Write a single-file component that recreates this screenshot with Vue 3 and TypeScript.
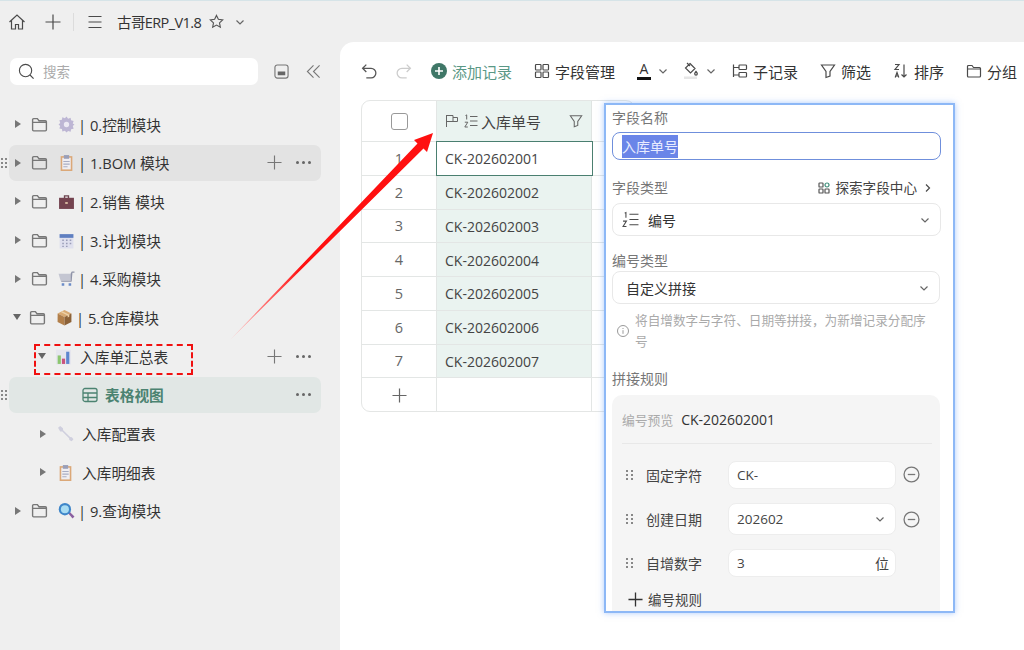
<script setup lang="ts">
type Shape = { d: string; fill: string }

const emojis: Record<string, Shape[]> = {
  gear: [
    { d: 'M8 .5l1.500 2 2.400-.8.4 2.400 2.400.5-.8 2.400L15.500 8l-1.600 1.500.8 2.400-2.400.5-.4 2.400-2.400-.8L8 15.500 6.500 13.900l-2.400.8-.4-2.400-2.400-.5.8-2.400L.5 8l1.600-1.500-.8-2.400 2.400-.5.4-2.400 2.400.8z', fill: '#bdb6d4' },
    { d: 'M8 5.500a2.500 2.500 0 1 0 0 5 2.500 2.500 0 0 0 0-5z', fill: '#ece9f3' },
  ],
  clip: [
    { d: 'M2.500 2h11v14h-11z', fill: '#dba878' },
    { d: 'M4 3.500h8v11H4z', fill: '#f0eef2' },
    { d: 'M5.500 1h5v3.500h-5z', fill: '#9a9fb8' },
    { d: 'M5 6.500h6v1H5zM5 9h6v1H5zM5 11.500h4v1H5z', fill: '#a9adc4' },
  ],
  bag: [
    { d: 'M5.500 2h5v3H9.200V3.300H6.800V5H5.500z', fill: '#6e4550' },
    { d: 'M1 4.500h14V15H1z', fill: '#74434f' },
    { d: 'M6.800 8.500h2.400v1.800H6.800z', fill: '#d8b9a0' },
  ],
  calendar: [
    { d: 'M1.500 2h13v13.500h-13z', fill: '#dfe0ee' },
    { d: 'M1.500 2h13v3.500h-13z', fill: '#5f7fc0' },
    { d: 'M4 7h1.500v1.500H4zM7.500 7H9v1.500H7.500zM11 7h1.500v1.500H11zM4 10h1.500v1.500H4zM7.500 10H9v1.500H7.500zM11 10h1.500v1.500H11zM4 13h1.500v1.200H4zM7.500 13H9v1.200H7.500z', fill: '#9a9db8' },
  ],
  cart: [
    { d: 'M.5 3.500h11.500l1 6.500H2.500z', fill: '#c4c6d2' },
    { d: 'M12 3l1-1.500h2.500v1h-1.900L12.800 11H3v-1h9z', fill: '#8f93a8' },
    { d: 'M3.500 12.500h2.400v2.400H3.500zM10 12.500h2.400v2.400H10z', fill: '#6b8cc8' },
  ],
  box: [
    { d: 'M8 1l6.500 3.300L8 7.600 1.500 4.300z', fill: '#d9aa73' },
    { d: 'M1.500 4.300L8 7.600v7.900l-6.500-3.300z', fill: '#b27f4a' },
    { d: 'M14.500 4.300L8 7.600v7.900l6.500-3.300z', fill: '#8d6238' },
    { d: 'M4.500 2.800L11 6.100v2l1.500-.8v-2L6 2z', fill: '#eed2a9' },
  ],
  chart: [
    { d: 'M1 1.500h14v14H1z', fill: '#e6e6ee' },
    { d: 'M2.500 7h3v8h-3z', fill: '#8cc66f' },
    { d: 'M6.500 10h3v5h-3z', fill: '#c9547e' },
    { d: 'M10.500 3.500h3V15h-3z', fill: '#5e86cf' },
  ],
  wrench: [
    { d: 'M1 2.500L3 1l2.600 2 .2 2 6.500 6.300 1.700.2 1.500 2-1.700 1.800-2.200-1.300-.2-1.500L5 6.200 3 6z', fill: '#cfcfde' },
  ],
  search: [
    { d: 'M9.500 10.500l1.400-1.400 4.600 4.600-1.800 1.800z', fill: '#8a5fa0' },
    { d: 'M6.500 1a5.800 5.800 0 1 0 0 11.600A5.800 5.800 0 0 0 6.500 1z', fill: '#3f86c9' },
    { d: 'M6.500 3a3.800 3.800 0 1 0 0 7.600A3.800 3.800 0 0 0 6.500 3z', fill: '#a9dcf2' },
  ],
}

type TreeRow = {
  label: string
  emoji?: string
  depth: number
  open?: boolean
  hover?: boolean
  marked?: boolean
}

const treeRows: TreeRow[] = [
  { label: '| 0.控制模块', emoji: 'gear', depth: 0 },
  { label: '| 1.BOM 模块', emoji: 'clip', depth: 0, hover: true },
  { label: '| 2.销售 模块', emoji: 'bag', depth: 0 },
  { label: '| 3.计划模块', emoji: 'calendar', depth: 0 },
  { label: '| 4.采购模块', emoji: 'cart', depth: 0 },
  { label: '| 5.仓库模块', emoji: 'box', depth: 0, open: true },
  { label: '入库单汇总表', emoji: 'chart', depth: 1, open: true, marked: true },
  { label: '表格视图', depth: 2 },
  { label: '入库配置表', emoji: 'wrench', depth: 1 },
  { label: '入库明细表', emoji: 'clip', depth: 1 },
  { label: '| 9.查询模块', emoji: 'search', depth: 0 },
]

const records = [1, 2, 3, 4, 5, 6, 7].map((n) => ({ n, code: `CK-20260200${n}` }))
</script>

<template>
  <div class="app">
    <header class="topbar">
      <svg class="ico home" viewBox="0 0 18 18"><path d="M1.500 9L9 2l7.500 7M3.500 7.500V16h4v-4.500h3V16h4V7.500" /></svg>
      <svg class="ico add" viewBox="0 0 16 16"><path d="M8 .5v15M.5 8h15" /></svg>
      <span class="bar-sep"></span>
      <svg class="ico menu" viewBox="0 0 16 16"><path d="M1.500 2.500h13M1.500 8h13M1.500 13.500h13" /></svg>
      <span class="title">古哥ERP_V1.8</span>
      <svg class="ico star" viewBox="0 0 16 16"><path d="M8 1.500l2 4.200 4.600.6-3.400 3.200.9 4.600L8 11.800l-4.100 2.300.9-4.600L1.400 6.300 6 5.700z" /></svg>
      <svg class="ico chev" viewBox="0 0 10 10"><path d="M1.500 3.500L5 7l3.500-3.500" /></svg>
    </header>

    <div class="body">
      <aside class="sidebar">
        <div class="search-line">
          <div class="search">
            <svg class="ico search-ico" viewBox="0 0 18 18"><circle cx="8" cy="8" r="6.500" /><path d="M12.700 12.700L16.500 16.500" /></svg>
            <span>搜索</span>
          </div>
          <svg class="ico side-btn" viewBox="0 0 16 16"><rect x="1" y="1" width="14" height="14" rx="2.500" /><rect class="solid" x="4" y="8" width="8" height="4" /></svg>
          <svg class="ico collapse" viewBox="0 0 16 16"><path d="M8 1.500L1.500 8 8 14.500M14.500 1.500L8 8l6.500 6.500" /></svg>
        </div>

        <div class="tree">
          <div
            v-for="row in treeRows"
            :key="row.label"
            class="tree-row"
            :class="[`depth-${row.depth}`, { hovered: row.hover, selected: row.depth === 2 }]"
          >
            <span v-if="row.hover || row.depth === 2" class="grip"><i v-for="d in 6" :key="d"></i></span>
            <span v-if="row.marked" class="dash-mark"></span>

            <template v-if="row.depth === 2">
              <svg class="ico view-ico" viewBox="0 0 16 16"><rect x="1" y="1.500" width="14" height="13" rx="2" /><path d="M1 6h14M1 10.500h14M6 6v8.500" /></svg>
              <span class="view-name">{{ row.label }}</span>
            </template>
            <template v-else>
              <span class="caret" :class="{ open: row.open }"></span>
              <svg v-if="row.depth === 0" class="ico folder" viewBox="0 0 16 16"><path d="M1.500 3.500a1 1 0 0 1 1-1H6l1.500 2h6a1 1 0 0 1 1 1V13a1 1 0 0 1-1 1h-11a1 1 0 0 1-1-1zM1.500 6h13" /></svg>
              <svg class="emoji" viewBox="0 0 16 16"><path v-for="s in emojis[row.emoji as string]" :key="s.d" :d="s.d" :fill="s.fill" /></svg>
              <span class="row-name">{{ row.label }}</span>
            </template>

            <span class="row-actions">
              <svg v-if="row.hover || row.marked" class="ico row-plus" viewBox="0 0 16 16"><path d="M8 .5v15M.5 8h15" /></svg>
              <span v-if="row.hover || row.marked || row.depth === 2" class="dots"><i></i><i></i><i></i></span>
            </span>
          </div>
        </div>
      </aside>

      <main class="main">
        <div class="toolbar">
          <svg class="ico undo" viewBox="0 0 16 16"><path d="M5 1.500L1.500 5 5 8.500M1.500 5h8a4.500 4.500 0 0 1 0 9H5" /></svg>
          <svg class="ico undo redo" viewBox="0 0 16 16"><path d="M11 1.500L14.500 5 11 8.500M14.500 5h-8a4.500 4.500 0 0 0 0 9H11" /></svg>
          <span class="tool add-record">
            <svg class="plus-disc" viewBox="0 0 16 16"><circle cx="8" cy="8" r="8" /><path d="M8 4v8M4 8h8" /></svg>
            添加记录
          </span>
          <span class="tool">
            <svg class="ico tool-ico" viewBox="0 0 16 16"><rect x="1.500" y="1.500" width="5.500" height="5.500" rx=".8" /><rect x="9" y="1.500" width="5.500" height="5.500" rx=".8" /><rect x="1.500" y="9" width="5.500" height="5.500" rx=".8" /><rect x="9" y="9" width="5.500" height="5.500" rx=".8" /></svg>
            字段管理
          </span>
          <span class="tool swatch">
            <span class="font-a">A</span>
            <svg class="ico chev" viewBox="0 0 10 10"><path d="M1.500 3.500L5 7l3.500-3.500" /></svg>
          </span>
          <span class="tool swatch">
            <svg class="ico bucket" viewBox="0 0 16 18"><path d="M7 1.500l5 5-4.500 4.500-5-5zM4 1l3 3M13 9.500c1 1.200 1.300 1.800 1.300 2.300a1.300 1.300 0 0 1-2.600 0c0-.5.300-1.100 1.300-2.300z" /><rect class="pale" x="1" y="14.500" width="13" height="2.500" /></svg>
            <svg class="ico chev" viewBox="0 0 10 10"><path d="M1.500 3.500L5 7l3.500-3.500" /></svg>
          </span>
          <span class="tool sub-record">
            <svg class="ico tool-ico" viewBox="0 0 16 16"><path d="M1.500 1.500V14M1.500 4.500H7M1.500 12H7" /><rect x="7" y="2" width="7.500" height="4.500" rx=".8" /><rect x="7" y="9.500" width="7.500" height="4.500" rx=".8" /></svg>
            子记录
          </span>
          <span class="tool">
            <svg class="ico tool-ico" viewBox="0 0 16 16"><path d="M1.500 2h13L10 8.500V13l-4 1.500v-6z" /></svg>
            筛选
          </span>
          <span class="tool">
            <svg class="ico tool-ico" viewBox="0 0 16 16"><path d="M2 1.500h4L2 6.500h4M2.200 14.500L4 9.500l1.800 5M2.800 13h2.400M11 1.500V14M8.500 11.500L11 14l2.500-2.500" /></svg>
            排序
          </span>
          <span class="tool">
            <svg class="ico tool-ico" viewBox="0 0 16 16"><path d="M1.500 3.500a1 1 0 0 1 1-1H6l1.500 2h6a1 1 0 0 1 1 1V13a1 1 0 0 1-1 1h-11a1 1 0 0 1-1-1zM1.500 6h13" /></svg>
            分组
          </span>
        </div>

        <div class="sheet">
          <div class="sheet-row head">
            <div class="c-num"><span class="check"></span></div>
            <div class="c-code">
              <svg class="ico head-ico" viewBox="0 0 14 14"><path d="M1.500 1v12M1.500 1.500h6.500v6H1.500M8 3.500h4.500v4H8" /></svg>
              <svg class="ico head-ico list" viewBox="0 0 14 14"><path d="M6 2.500h7.500M6 7h7.500M6 11.500h7.500M1.500 1.500l1.200-.6v4.600M.8 8.200h3L.8 13h3" /></svg>
              <span class="head-name">入库单号</span>
              <svg class="ico head-filter" viewBox="0 0 16 16"><path d="M1.500 2h13L10 8.500V13l-4 1.500v-6z" /></svg>
            </div>
            <div class="c-rest"></div>
          </div>
          <div v-for="r in records" :key="r.n" class="sheet-row">
            <div class="c-num">{{ r.n }}</div>
            <div class="c-code" :class="{ active: r.n === 1 }">{{ r.code }}</div>
            <div class="c-rest"></div>
          </div>
          <div class="sheet-row last">
            <div class="c-num"><svg class="ico add-row" viewBox="0 0 16 16"><path d="M8 .5v15M.5 8h15" /></svg></div>
            <div class="c-blank"></div>
            <div class="c-rest"></div>
          </div>
        </div>

        <section class="popup">
          <div class="lbl name-lbl">字段名称</div>
          <div class="field name-field"><span class="picked">入库单号</span></div>

          <div class="lbl type-lbl">
            <span>字段类型</span>
            <span class="explore">
              <svg class="explore-ico" viewBox="0 0 12 12"><rect x="1" y="1" width="4" height="4" rx=".6" /><rect x="1" y="7" width="4" height="4" rx=".6" /><rect x="7" y="7" width="4" height="4" rx=".6" /><rect class="teal" x="7" y="1" width="4" height="4" rx="2" /></svg>
              探索字段中心
              <svg class="ico more" viewBox="0 0 10 10"><path d="M3 1.500L6.500 5 3 8.500" /></svg>
            </span>
          </div>
          <div class="field select type-select">
            <svg class="ico list-ico" viewBox="0 0 16 16"><path d="M7 3h8.500M7 8h8.500M7 13h8.500M2.500 2l1.200-.6v5M1 9.500h3.200l-3.200 5h3.200" /></svg>
            <span>编号</span>
            <svg class="ico chev end" viewBox="0 0 10 10"><path d="M1.500 3.500L5 7l3.500-3.500" /></svg>
          </div>

          <div class="lbl kind-lbl">编号类型</div>
          <div class="field select kind">
            <span>自定义拼接</span>
            <svg class="ico chev end" viewBox="0 0 10 10"><path d="M1.500 3.500L5 7l3.500-3.500" /></svg>
          </div>

          <div class="hint">
            <svg class="ico info" viewBox="0 0 14 14"><circle cx="7" cy="7" r="5.500" /><path d="M7 6.200v3.600M7 4v1" /></svg>
            <p>将自增数字与字符、日期等拼接，为新增记录分配序号</p>
          </div>

          <div class="lbl rule-lbl">拼接规则</div>
          <div class="rules">
            <div class="preview">
              <span class="pre-lbl">编号预览</span>
              <span class="pre-val">CK-202602001</span>
            </div>
            <div class="rule">
              <span class="pins"><i v-for="d in 6" :key="d"></i></span>
              <span class="rule-name">固定字符</span>
              <div class="rule-box">CK-</div>
              <svg class="ico minus" viewBox="0 0 16 16"><circle cx="8" cy="8" r="7" /><path d="M4.500 8h7" /></svg>
            </div>
            <div class="rule date">
              <span class="pins"><i v-for="d in 6" :key="d"></i></span>
              <span class="rule-name">创建日期</span>
              <div class="rule-box tall">
                202602
                <svg class="ico chev end" viewBox="0 0 10 10"><path d="M1.500 3.500L5 7l3.500-3.500" /></svg>
              </div>
              <svg class="ico minus" viewBox="0 0 16 16"><circle cx="8" cy="8" r="7" /><path d="M4.500 8h7" /></svg>
            </div>
            <div class="rule counter">
              <span class="pins"><i v-for="d in 6" :key="d"></i></span>
              <span class="rule-name">自增数字</span>
              <div class="rule-box">3<span class="unit">位</span></div>
            </div>
            <div class="add-rule">
              <svg class="ico add-rule-ico" viewBox="0 0 16 16"><path d="M8 .5v15M.5 8h15" /></svg>
              编号规则
            </div>
          </div>
        </section>

        <svg class="arrow" viewBox="0 0 1024 650">
          <defs>
            <linearGradient id="arrow-fade" gradientUnits="userSpaceOnUse" x1="230" y1="340" x2="300" y2="266">
              <stop offset="0" stop-color="#ffc9c9" />
              <stop offset="1" stop-color="#ff1010" />
            </linearGradient>
          </defs>
          <polygon points="230,340 417.500,143.500 414,140 433,133 427,152 423.500,148.500" fill="url(#arrow-fade)" />
        </svg>
      </main>
    </div>
  </div>
</template>

<style>
html,
body {
  margin: 0;
  background: #efefef;
}
</style>

<style scoped>
.app {
  width: 1024px;
  height: 650px;
  overflow: hidden;
  display: flex;
  flex-direction: column;
  background: #efefef;
  color: #333;
  font-family: "Open Sans", "Noto Sans CJK SC", sans-serif;
  font-size: 14.5px;
  border-top: 1px solid #d6e4e8;
  box-sizing: border-box;
}

.ico {
  fill: none;
  stroke: #4a4a4a;
  stroke-width: 1.2;
  flex: none;
}

/* top bar */
.topbar {
  height: 41px;
  flex: none;
  display: flex;
  align-items: center;
  padding-left: 8px;
}
.home { width: 18px; height: 18px; }
.add { width: 16px; height: 16px; margin-left: 19px; stroke-width: 1.2; }
.bar-sep { width: 1px; height: 18px; background: #dcdcdc; margin-left: 12px; }
.menu { width: 16px; height: 16px; margin-left: 13px; }
.title { margin-left: 14px; font-size: 14.5px; letter-spacing: -.6px; }
.star { width: 15px; height: 15px; margin-left: 8px; stroke: #555; }
.chev { width: 10px; height: 10px; stroke: #666; }
.topbar .chev { margin-left: 11px; }

/* sidebar */
.body {
  flex: 1;
  display: flex;
  min-height: 0;
}
.sidebar {
  width: 340px;
  flex: none;
}
.search-line {
  display: flex;
  align-items: center;
  padding: 16px 0 0 10px;
}
.search {
  width: 248px;
  height: 27px;
  box-sizing: border-box;
  background: #fff;
  border-radius: 7px;
  display: flex;
  align-items: center;
  padding: 0 0 0 8px;
  gap: 8px;
  font-size: 13.5px;
  color: #aaa;
}
.search span { position: relative; top: -1px; }
.search-ico { width: 17px; height: 17px; }
.side-btn { width: 15px; height: 15px; margin-left: 16px; stroke: #777; }
.side-btn .solid { fill: #666; stroke: none; }
.collapse { width: 15px; height: 15px; margin-left: 17px; stroke: #777; }

.tree {
  margin-top: 21px;
  display: flex;
  flex-direction: column;
  gap: 2.7px;
}
.tree-row {
  position: relative;
  width: 312px;
  height: 36px;
  margin-left: 9px;
  border-radius: 7px;
  display: flex;
  align-items: center;
  box-sizing: border-box;
}
.tree-row.hovered { background: #e3e3e3; }
.tree-row.selected { background: #e1e7e5; }
.depth-0 { padding-left: 5px; }
.depth-1 { padding-left: 30px; }
.depth-2 { padding-left: 73px; }

.caret {
  width: 0;
  height: 0;
  border-left: 6px solid #777;
  border-top: 4px solid transparent;
  border-bottom: 4px solid transparent;
  margin-left: 1px;
  margin-right: 3px;
  flex: none;
}
.caret.open {
  border-left: 4.5px solid transparent;
  border-right: 4.5px solid transparent;
  border-top: 6px solid #666;
  border-bottom: 0;
  margin-left: -1px;
  margin-right: 1px;
}
.folder { width: 17px; height: 17px; margin-left: 7px; stroke: #777; stroke-width: 1.3; }
.emoji { width: 17px; height: 17px; margin-left: 10px; flex: none; }
.depth-1 .emoji { margin-left: 8px; }
.row-name { margin-left: 3px; font-size: 14.7px; white-space: nowrap; }
.depth-1 .row-name { margin-left: 8px; }
.view-ico { width: 16px; height: 16px; stroke: #4b8371; stroke-width: 1.3; }
.view-name { margin-left: 7px; font-weight: 700; color: #4b8371; font-size: 14.7px; }

.row-actions {
  margin-left: auto;
  display: flex;
  align-items: center;
  padding-right: 10px;
  gap: 14px;
}
.row-plus { width: 15px; height: 15px; stroke: #777; stroke-width: 1.2; }
.dots { display: flex; gap: 3px; }
.dots i { width: 3px; height: 3px; border-radius: 50%; background: #666; }
.grip {
  position: absolute;
  left: -8px;
  top: 13px;
  display: grid;
  grid-template-columns: 2px 2px;
  gap: 2px;
}
.grip i { width: 2px; height: 2px; background: #888; }
.dash-mark {
  position: absolute;
  left: 25px;
  top: 6px;
  width: 159px;
  height: 31px;
  border: 2px dashed #f01010;
  box-sizing: border-box;
}

/* main */
.main {
  flex: 1;
  position: relative;
  background: #fff;
  border-top-left-radius: 14px;
}
.toolbar {
  height: 58px;
  box-sizing: border-box;
  padding-left: 21px;
  display: flex;
  align-items: center;
  white-space: nowrap;
  font-size: 15px;
}
.undo { width: 17px; height: 17px; stroke: #555; }
.redo { margin-left: 17px; stroke: #ccc; }
.tool {
  display: flex;
  align-items: center;
  gap: 5px;
  margin-left: 22px;
}
.add-record { margin-left: 19px; color: #5a9886; }
.plus-disc { width: 16px; height: 16px; }
.plus-disc circle { fill: #3f7767; }
.plus-disc path { stroke: #fff; stroke-width: 1.6; }
.tool-ico { width: 16px; height: 16px; }
.swatch { gap: 7px; }
.tool.swatch + .tool.swatch { margin-left: 15px; }
.sub-record { margin-left: 16px; }
.font-a {
  display: block;
  font-size: 14px;
  line-height: 14px;
  width: 14px;
  text-align: center;
  border-bottom: 3px solid #111;
  padding-bottom: 1px;
}
.bucket { width: 16px; height: 18px; }
.bucket .pale { fill: #e6e6e6; stroke: none; }

/* sheet */
.sheet {
  width: 274px;
  margin-left: 21px;
  border: 1px solid #e4e6e5;
  border-radius: 9px;
  overflow: hidden;
  box-sizing: border-box;
  height: 312px;
}
.sheet-row {
  display: grid;
  grid-template-columns: 75px 155px 1fr;
  height: 33.75px;
  box-sizing: border-box;
  border-bottom: 1px solid #e3e6e5;
}
.sheet-row.head { height: 41px; }
.sheet-row.last { border-bottom: 0; }
.c-num {
  display: flex;
  align-items: center;
  justify-content: center;
  color: #666;
  border-right: 1px solid #e3e6e5;
}
.c-code {
  display: flex;
  align-items: center;
  padding: 1px 0 0 8px;
  background: #eaf3f0;
  color: #444;
  font-size: 14px;
  border-right: 1px solid #dfe4e2;
}
.c-code.active {
  background: #fff;
  border: 1.5px solid #4a7f70;
  margin: -1px;
  z-index: 1;
  position: relative;
}
.c-blank { border-right: 1px solid #e3e6e5; }
.check {
  width: 15px;
  height: 15px;
  border: 1.5px solid #999;
  border-radius: 3px;
}
.head .c-code { gap: 5px; padding: 0 0 0 8px; }
.head-ico { width: 14px; height: 14px; stroke: #666; stroke-width: 1; }
.head-name { margin-left: -2px; font-size: 15px; color: #444; }
.head-filter { width: 14px; height: 14px; margin-left: auto; margin-right: 8px; stroke: #666; }
.add-row { width: 15px; height: 15px; stroke: #666; stroke-width: 1.3; }

/* field popup */
.popup {
  position: absolute;
  left: 264px;
  top: 61px;
  width: 351px;
  height: 510px;
  box-sizing: border-box;
  padding: 0 13px 0 6px;
  background: #fff;
  border: 2px solid #8db8f6;
  box-shadow: 0 0 6px rgba(90, 150, 250, .5);
  overflow: hidden;
  font-size: 14px;
}
.lbl {
  height: 24px;
  line-height: 24px;
  color: #777;
}
.name-lbl { margin-top: 1px; }
.field {
  height: 28px;
  box-sizing: border-box;
  border: 1px solid #e8e8e8;
  border-radius: 8px;
  margin-top: 2px;
  width: 329px;
}
.name-field {
  border-color: #6f8fdc;
  padding: 2px 0 0 9px;
  height: 28px;
}
.picked {
  display: inline-block;
  background: #6a85e8;
  color: #e8ecff;
  font-size: 14px;
  height: 23px;
  line-height: 23px;
}
.type-lbl {
  margin-top: 16px;
  display: flex;
  justify-content: space-between;
  width: 329px;
  box-sizing: border-box;
}
.explore {
  display: flex;
  align-items: center;
  color: #444;
  font-size: 13.6px;
}
.explore-ico { width: 12px; height: 12px; margin-right: 5px; }
.explore-ico rect { fill: none; stroke: #555; stroke-width: 1.2; }
.explore-ico .teal { stroke: #3f8f7b; }
.more { width: 10px; height: 10px; margin-left: 6px; margin-right: 8px; }
.select {
  display: flex;
  align-items: center;
  height: 33px;
  color: #333;
  gap: 9px;
  padding-left: 9px;
}
.type-select { margin-top: 3px; }
.list-ico { width: 17px; height: 17px; stroke-width: 1; }
.end { margin-left: auto; margin-right: 10px; }
.kind-lbl { margin-top: 15px; height: 20px; line-height: 20px; }
.kind-lbl + .select { margin-top: 0; }
.kind { padding-left: 13px; height: 33px; width: 328px; }
.hint {
  display: flex;
  align-items: center;
  padding: 6px 0 0 4px;
  width: 316px;
  color: #aaa;
  font-size: 12.65px;
  line-height: 21px;
}
.hint p { margin: 0 0 0 5px; flex: 1; }
.info { width: 14px; height: 14px; stroke: #999; stroke-width: 1; }
.rule-lbl { margin-top: 16px; height: 21px; line-height: 21px; }
.rules {
  margin-top: 6px;
  width: 328px;
  height: 260px;
  background: #f5f5f5;
  border-radius: 10px;
  padding: 0 8px 0 10px;
  box-sizing: border-box;
}
.preview {
  height: 48px;
  display: flex;
  align-items: center;
  border-bottom: 1px solid #e8e8e8;
  gap: 8px;
}
.pre-lbl { color: #aaa; font-size: 12.8px; }
.pre-val { color: #333; font-size: 14px; }
.rule {
  display: flex;
  align-items: center;
  height: 29px;
  margin-top: 16px;
}
.rule.date { height: 32px; margin-top: 14px; }
.rule.counter { margin-top: 13px; }
.pins {
  display: grid;
  grid-template-columns: 2px 2px;
  gap: 2px 3px;
  margin-left: 4px;
}
.pins i { width: 2px; height: 2px; background: #888; }
.rule-name { margin-left: 13px; width: 82px; font-size: 14px; color: #444; }
.rule-box {
  width: 168px;
  height: 28px;
  background: #fff;
  border: 1px solid #ededed;
  border-radius: 8px;
  box-sizing: border-box;
  display: flex;
  align-items: center;
  padding-left: 8px;
  font-size: 13.5px;
  color: #444;
}
.rule-box.tall { height: 32px; }
.unit { margin-left: auto; margin-right: 6px; font-size: 14px; }
.minus { width: 17px; height: 17px; margin-left: 7px; stroke: #777; stroke-width: 1.2; }
.add-rule {
  display: flex;
  align-items: center;
  gap: 5px;
  margin-top: 12px;
  padding-left: 6px;
  font-size: 13.5px;
  color: #444;
}
.add-rule-ico { width: 15px; height: 15px; stroke: #333; stroke-width: 1.4; }

.arrow {
  position: absolute;
  left: -340px;
  top: -42px;
  width: 1024px;
  height: 650px;
  pointer-events: none;
  z-index: 3;
}
</style>
